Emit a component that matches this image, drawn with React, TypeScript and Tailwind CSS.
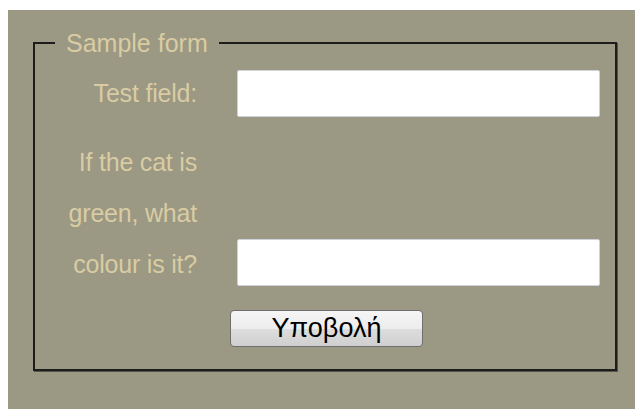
import React from "react";

const font = { fontFamily: '"Liberation Sans", Arial, sans-serif' };

export default function App() {
  return (
    <div className="w-[635px] h-[409px] bg-white pl-[8px] pt-[10px]" style={font}>
      <div className="w-[627px] h-[399px] bg-[#9b9883] pl-[25px] pt-[21px]">
        {/* Sample form */}
        <fieldset className="w-[584px] h-[340px] border-2 border-[#1d1d1b] pl-[20px] pt-[15px] shadow-[1px_1px_0_#55544a]">
          <legend className="px-[11px] text-[25px] leading-[24px] text-[#d9cca3]">
            Sample form
          </legend>

          <div className="flex items-center">
            <label className="w-[142px] text-right text-[25px] text-[#d9cca3] tracking-[-0.2px]">
              Test field:
            </label>
            <input
              type="text"
              className="ml-[40px] w-[363px] h-[47px] bg-white border border-[#cfd2dc] rounded-[2px] outline-none"
            />
          </div>

          <div className="flex items-end mt-[20px]">
            <label className="w-[142px] text-right text-[25px] leading-[51px] text-[#d9cca3] tracking-[-0.2px]">
              If the cat is
              <br />
              green, what
              <br />
              colour is it?
            </label>
            <input
              type="text"
              className="ml-[40px] mb-[4px] w-[363px] h-[47px] bg-white border border-[#cfd2dc] rounded-[2px] outline-none"
            />
          </div>

          <button
            type="submit"
            className="block ml-[175px] mt-[20px] w-[193px] h-[37px] rounded-[4px] border border-[#6f6f6f] bg-[linear-gradient(to_bottom,#f5f5f5_0%,#ededed_50%,#dddddd_52%,#cfcfcf_100%)] text-[27px] leading-[35px] text-black"
          >
            Υποβολή
          </button>
        </fieldset>
      </div>
    </div>
  );
}
